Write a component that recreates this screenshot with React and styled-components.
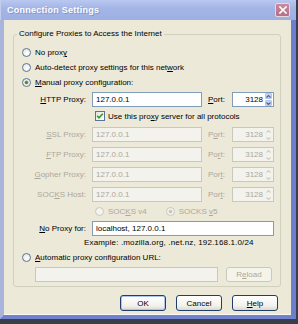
import React from "react";
import styled, { createGlobalStyle } from "styled-components";

const Global = createGlobalStyle`
  html, body { margin: 0; padding: 0; background: #fff; }
  body { width: 298px; height: 324px; overflow: hidden; font-family: "Liberation Sans", Arial, sans-serif; }
  * { box-sizing: border-box; }
`;

const FONT = `"Liberation Sans", Arial, sans-serif`;

const Window = styled.div`
  width: 298px;
  height: 324px;
  display: flex;
  flex-direction: column;
  background: #3a3e4a;
  padding: 0 2px 5px 0;
`;

const TitleBar = styled.div`
  height: 20px;
  flex: none;
  display: flex;
  align-items: center;
  justify-content: space-between;
  padding: 0 6px 0 6px;
  background: linear-gradient(#b9c8f0, #a4b6e6 40%, #9eb0e2);
  border-left: 1px solid #c3cdec;
`;

const Title = styled.span`
  font-family: ${FONT};
  font-weight: bold;
  font-size: 9px;
  color: #fbfcff;
  text-shadow: 1px 1px 0 #8597cc;
  letter-spacing: 0.25px;
`;

const CloseButton = styled.div`
  width: 15px;
  height: 14px;
  border: 1px solid #e9d6de;
  border-radius: 2px;
  background: linear-gradient(#c98b9d, #b56f86);
  display: flex;
  align-items: center;
  justify-content: center;
`;

const Frame = styled.div`
  flex: 1;
  display: flex;
  flex-direction: column;
  background: #ece9d8;
  border-left: 4px solid #a8b4dc;
  border-right: 5px solid #6c7ecf;
  border-bottom: 4px solid #7082cc;
  box-shadow: inset 0 -1px 0 #fbfaf4;
  padding: 9px 10px 0 9px;
  font-family: ${FONT};
  font-size: 8px;
  color: #000;
`;

const Group = styled.fieldset`
  margin: 0;
  min-width: 0;
  border: 1px solid #d0d0bf;
  border-radius: 3px;
  padding: 6px 8px 4px 8px;
  display: flex;
  flex-direction: column;
`;

const Legend = styled.legend`
  padding: 0 2px;
  margin-left: -5px;
  font-size: 8px;
  line-height: 10px;
  color: #000;
`;

const Row = styled.div`
  display: flex;
  align-items: center;
  height: ${(p) => p.$h || 15}px;
  margin-top: ${(p) => p.$mt || 0}px;
  margin-left: ${(p) => p.$ml || 0}px;
  gap: ${(p) => (p.$gap != null ? p.$gap : 4)}px;
  white-space: nowrap;
  letter-spacing: ${(p) => p.$ls || 0}px;
  color: ${(p) => (p.$disabled ? "#aca899" : "#000")};
`;

const Grid = styled.div`
  display: grid;
  grid-template-columns: ${(p) => p.$cols};
  align-items: center;
  height: 15px;
  margin-top: ${(p) => p.$mt || 0}px;
  white-space: nowrap;
`;

const Label = styled.span`
  text-align: ${(p) => (p.$right ? "right" : "left")};
  padding: ${(p) => (p.$right ? "0 6px 0 0" : "0 0 0 6px")};
  color: ${(p) => (p.$disabled ? "#aca899" : "#000")};
`;

const Key = styled.span`
  text-decoration: underline;
  text-underline-offset: 1px;
`;

const RadioDot = styled.span`
  width: 9px;
  height: 9px;
  flex: none;
  border-radius: 50%;
  border: 1px solid ${(p) => (p.$disabled ? "#cac8bb" : "#5a7396")};
  background: ${(p) => (p.$disabled ? "#f4f3ee" : "radial-gradient(circle at 60% 65%, #fff, #e4e2da)")};
  display: flex;
  align-items: center;
  justify-content: center;
  &::after {
    content: "";
    display: ${(p) => (p.$checked ? "block" : "none")};
    width: 3px;
    height: 3px;
    border-radius: 50%;
    background: ${(p) => (p.$disabled ? "#c8c6b9" : "#4c8a4c")};
    box-shadow: 0 0 0 0.5px ${(p) => (p.$disabled ? "#d6d4c8" : "#7fb27f")};
  }
`;

const CheckBox = styled.span`
  width: 10px;
  height: 10px;
  flex: none;
  border: 1px solid #5a7396;
  background: linear-gradient(135deg, #e4e2da, #fff);
  display: flex;
  align-items: center;
  justify-content: center;
`;

const Field = styled.input`
  width: ${(p) => p.$w}px;
  height: 15px;
  margin: 0;
  border: 1px solid ${(p) => (p.disabled ? "#cac8bb" : "#7f9db9")};
  background: ${(p) => (p.disabled ? "#f3f2ec" : "#fff")};
  color: ${(p) => (p.disabled ? "#aca899" : "#000")};
  font-family: ${FONT};
  font-size: 8px;
  padding: 0 3px;
  outline: none;
  -webkit-text-fill-color: ${(p) => (p.disabled ? "#aca899" : "#000")};
  opacity: 1;
`;

const Spin = styled.div`
  width: 42px;
  height: 15px;
  display: flex;
  border: 1px solid ${(p) => (p.$disabled ? "#cac8bb" : "#7f9db9")};
  background: ${(p) => (p.$disabled ? "#f3f2ec" : "#fff")};
  color: ${(p) => (p.$disabled ? "#aca899" : "#000")};
`;

const SpinValue = styled.span`
  flex: 1;
  text-align: right;
  padding-right: 2px;
  line-height: 13px;
`;

const SpinButtons = styled.div`
  width: 8px;
  display: flex;
  flex-direction: column;
  gap: 1px;
  padding: 0 1px 0 0;
`;

const SpinBtn = styled.div`
  flex: 1;
  border-radius: 1px;
  background: ${(p) => (p.$disabled ? "#f3f2ec" : "#c7d5f7")};
  border: ${(p) => (p.$disabled ? "none" : "0.5px solid #b3c5ef")};
  display: flex;
  align-items: center;
  justify-content: center;
`;

const Button = styled.button`
  width: ${(p) => p.$w || 46}px;
  height: ${(p) => p.$h || 16}px;
  margin: 0;
  padding: 0;
  border: 1px solid ${(p) => (p.disabled ? "#cac8bb" : "#1f3f6a")};
  border-radius: 3px;
  background: ${(p) => (p.disabled ? "#f5f4ea" : "linear-gradient(#ffffff, #f2f1ec 70%, #dcd8cc)")};
  box-shadow: ${(p) => (p.$default ? "inset 0 0 0 1px #aec4f0" : "none")};
  font-family: ${FONT};
  font-size: 8px;
  color: ${(p) => (p.disabled ? "#aca899" : "#000")};
`;

const Buttons = styled.div`
  display: flex;
  justify-content: flex-end;
  gap: 10px;
  margin-top: 8px;
  padding-right: 3px;
`;

const Arrow = ({ up, color }) => (
  <svg width="5" height="3" viewBox="0 0 5 3">
    <polyline
      points={up ? "0.5,2.5 2.5,0.5 4.5,2.5" : "0.5,0.5 2.5,2.5 4.5,0.5"}
      fill="none"
      stroke={color}
      strokeWidth="1.1"
    />
  </svg>
);

const Spinner = ({ value, disabled }) => (
  <Spin $disabled={disabled}>
    <SpinValue>{value}</SpinValue>
    <SpinButtons>
      <SpinBtn $disabled={disabled}>
        <Arrow up color={disabled ? "#cfcdc2" : "#4d6185"} />
      </SpinBtn>
      <SpinBtn $disabled={disabled}>
        <Arrow color={disabled ? "#cfcdc2" : "#4d6185"} />
      </SpinBtn>
    </SpinButtons>
  </Spin>
);

const Radio = ({ checked, disabled, children, ...rest }) => (
  <Row $disabled={disabled} {...rest}>
    <RadioDot $checked={checked} $disabled={disabled} />
    <span>{children}</span>
  </Row>
);

const PROXY_COLS = "70px 110px 30px 42px";

const ProxyRow = ({ label, portLabel, disabled, mt }) => (
  <Grid $cols={PROXY_COLS} $mt={mt}>
    <Label $right $disabled={disabled}>{label}</Label>
    <Field $w={110} disabled={disabled} defaultValue="127.0.0.1" />
    <Label $disabled={disabled}>{portLabel}</Label>
    <Spinner value="3128" disabled={disabled} />
  </Grid>
);

export default function App() {
  return (
    <>
      <Global />
      <Window>
        <TitleBar>
          <Title>Connection Settings</Title>
          <CloseButton>
            <svg width="8" height="8" viewBox="0 0 8 8">
              <path d="M1 1 L7 7 M7 1 L1 7" stroke="#fff" strokeWidth="1.6" strokeLinecap="square" />
            </svg>
          </CloseButton>
        </TitleBar>
        <Frame>
          <Group>
            <Legend>Configure Proxies to Access the Internet</Legend>
            <Radio>No prox<Key>y</Key></Radio>
            <Radio>Auto-detect proxy settings for this net<Key>w</Key>ork</Radio>
            <Radio checked><Key>M</Key>anual proxy configuration:</Radio>

            <ProxyRow mt={2} label={<><Key>H</Key>TTP Proxy:</>} portLabel={<><Key>P</Key>ort:</>} />

            <Row $h={16} $mt={1} $ml={73} $gap={3}>
              <CheckBox>
                <svg width="8" height="8" viewBox="0 0 8 8">
                  <polyline points="1.2,3.8 3,5.8 6.8,1.8" fill="none" stroke="#2e9a2e" strokeWidth="1.6" />
                </svg>
              </CheckBox>
              <span>Use this pro<Key>x</Key>y server for all protocols</span>
            </Row>

            <ProxyRow mt={3} disabled label={<><Key>S</Key>SL Proxy:</>} portLabel={<>P<Key>o</Key>rt:</>} />
            <ProxyRow mt={5} disabled label={<><Key>F</Key>TP Proxy:</>} portLabel={<>Po<Key>r</Key>t:</>} />
            <ProxyRow mt={5} disabled label={<><Key>G</Key>opher Proxy:</>} portLabel={<>Por<Key>t</Key>:</>} />
            <ProxyRow mt={5} disabled label={<>SOC<Key>K</Key>S Host:</>} portLabel={<>Por<Key>t</Key>:</>} />

            <Row $h={16} $mt={1} $ml={73} $gap={19} $disabled>
              <Radio $gap={4} disabled>SOC<Key>K</Key>S v4</Radio>
              <Radio $gap={4} disabled checked>SOCKS <Key>v</Key>5</Radio>
            </Row>

            <Grid $cols="70px 182px" $mt={2}>
              <Label $right><Key>N</Key>o Proxy for:</Label>
              <Field $w={182} defaultValue="localhost, 127.0.0.1" />
            </Grid>

            <Row $h={11} $mt={1} $ml={62} $ls={0.15}>
              Example: .mozilla.org, .net.nz, 192.168.1.0/24
            </Row>

            <Radio $mt={2}><Key>A</Key>utomatic proxy configuration URL:</Radio>

            <Row $mt={2} $ml={13} $gap={8}>
              <Field $w={183} disabled defaultValue="" />
              <Button disabled $w={46} $h={15}>R<Key>e</Key>load</Button>
            </Row>
          </Group>

          <Buttons>
            <Button $default>OK</Button>
            <Button>Cancel</Button>
            <Button><Key>H</Key>elp</Button>
          </Buttons>
        </Frame>
      </Window>
    </>
  );
}
